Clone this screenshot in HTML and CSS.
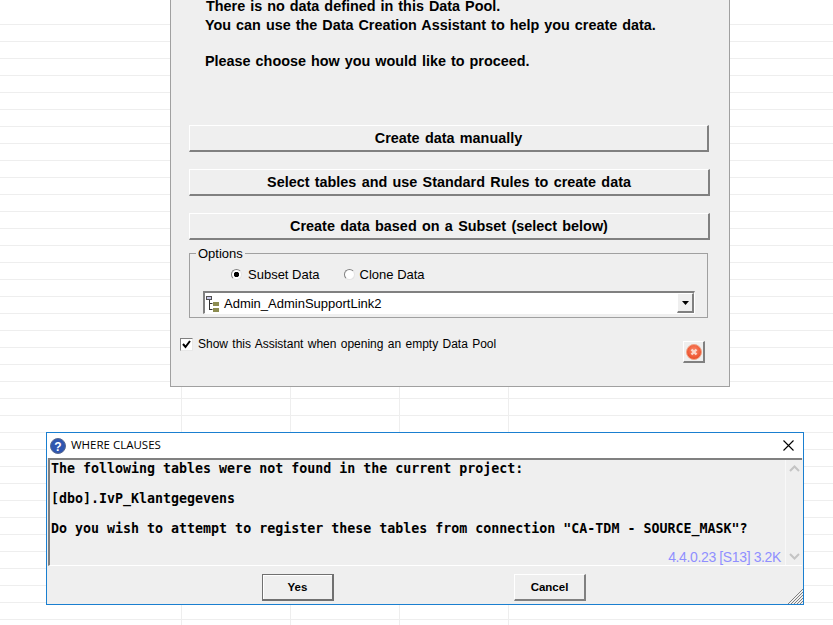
FILE: index.html
```html
<!DOCTYPE html>
<html lang="en">
<head>
<meta charset="utf-8">
<title>Data Creation Assistant</title>
<link rel="stylesheet" href="styles.css">
</head>
<body>
<div class="desktop">
  <div class="sheet-cols"></div>

  <section class="assistant">
    <div class="intro">
      <p class="intro-first">There is no data defined in this Data Pool.</p>
      <p class="intro-second">You can use the Data Creation Assistant to help you create data.</p>
      <p class="intro-third">Please choose how you would like to proceed.</p>
    </div>
    <div class="actions">
      <button class="action">Create data manually</button>
      <button class="action action-wide">Select tables and use Standard Rules to create data</button>
      <button class="action action-wide">Create data based on a Subset (select below)</button>
    </div>
    <div class="options">
      <span class="options-title">Options</span>
      <div class="radios">
        <span class="radio radio-on"></span><span class="radio-label">Subset Data</span>
        <span class="radio radio-second"></span><span class="radio-label radio-label-second">Clone Data</span>
      </div>
      <div class="combo">
        <svg class="tree-icon" width="15" height="17" viewBox="0 0 15 17">
          <rect x="0.5" y="1.5" width="5" height="3" fill="#c8c8e8" stroke="#505050"/>
          <path d="M3.5 5v10M3.5 8.5h3M3.5 14.5h3" fill="none" stroke="#303030"/>
          <rect x="7" y="7" width="6" height="4" fill="#8c8c50"/>
          <rect x="7" y="13" width="6" height="4" fill="#8c8c50"/>
        </svg>
        <span class="combo-value">Admin_AdminSupportLink2</span>
        <span class="combo-drop"><svg width="7" height="4" viewBox="0 0 7 4"><path d="M0 0h7L3.5 4z" fill="#000"/></svg></span>
      </div>
    </div>
    <div class="assistant-foot">
      <label class="show-check">
        <span class="checkbox"><svg width="9" height="9" viewBox="0 0 9 9"><path d="M1 4l2.5 3L8 1" fill="none" stroke="#000" stroke-width="2"/></svg></span>
        Show this Assistant when opening an empty Data Pool
      </label>
      <button class="close-btn" aria-label="Close">
        <svg width="16" height="16" viewBox="0 0 16 16">
          <defs>
            <radialGradient id="closeFill" cx="50%" cy="40%" r="60%">
              <stop offset="0" stop-color="#fb8a6c"/>
              <stop offset="1" stop-color="#ea4a24"/>
            </radialGradient>
          </defs>
          <circle cx="8" cy="8" r="7.5" fill="url(#closeFill)" stroke="#f0a488"/>
          <path d="M5.5 5.5l5 5M10.5 5.5l-5 5" stroke="#fbd8cc" stroke-width="2.4"/>
        </svg>
      </button>
    </div>
  </section>

  <section class="where">
    <header class="where-title">
      <svg class="help-icon" width="16" height="16" viewBox="0 0 16 16">
        <circle cx="8" cy="8" r="7.5" fill="#2f56b0" stroke="#5a6a90"/>
        <text x="8" y="12.5" class="help-mark">?</text>
      </svg>
      <span class="where-title-text">WHERE CLAUSES</span>
      <svg class="x-icon" width="11" height="11" viewBox="0 0 11 11"><path d="M0.5 0.5l10 10M10.5 0.5l-10 10" stroke="#000" stroke-width="1.1" fill="none"/></svg>
    </header>
    <div class="memo">
      <div class="memo-text">
        <p>The following tables were not found in the current project:</p>
        <p>[dbo].IvP_Klantgegevens</p>
        <p>Do you wish to attempt to register these tables from connection "CA-TDM - SOURCE_MASK"?</p>
        <span class="version">4.4.0.23 [S13] 3.2K</span>
      </div>
      <div class="scroll">
        <svg width="11" height="7" viewBox="0 0 11 7"><path d="M1 6l4.5-4.5L10 6" fill="none" stroke="#c4c4c4" stroke-width="2"/></svg>
        <svg width="11" height="7" viewBox="0 0 11 7"><path d="M1 1l4.5 4.5L10 1" fill="none" stroke="#c4c4c4" stroke-width="2"/></svg>
      </div>
    </div>
    <footer class="where-foot">
      <button class="dlg-btn dlg-default">Yes</button>
      <button class="dlg-btn">Cancel</button>
      <svg class="grip" width="16" height="16" viewBox="0 0 16 16"><path d="M16 1L1 16M16 4L4 16M16 7L7 16M16 10L10 16M16 13L13 16" stroke="#808080" fill="none"/></svg>
    </footer>
  </section>
</div>
</body>
</html>
```
FILE: styles.css
```css
* { box-sizing: border-box; }
html, body { margin: 0; padding: 0; }
body { font-family: "Liberation Sans", Arial, sans-serif; color: #000; background: #fff; }
p { margin: 0; }
button { font-family: inherit; color: #000; padding: 0; cursor: default; }

.desktop {
  position: relative;
  width: 833px;
  height: 625px;
  overflow: hidden;
  background-color: #fff;
  background-image: repeating-linear-gradient(to bottom, transparent 0, transparent 16px, #eeeeee 16px, #eeeeee 17px);
  background-position: 0 8px;
}
.sheet-cols {
  position: absolute;
  left: 181px;
  top: 387px;
  width: 328px;
  height: 238px;
  background-image: repeating-linear-gradient(to right, #eeeeee 0, #eeeeee 1px, transparent 1px, transparent 109px);
}

/* Assistant window */
.assistant {
  position: absolute;
  left: 170px;
  top: 0;
  width: 560px;
  height: 387px;
  background: #efefef;
  border: 1px solid #a0a0a0;
  border-top: 0;
  padding-left: 18px;
}
.intro { height: 125px; font-size: 14.4px; font-weight: bold; line-height: 18px; word-spacing: 1px; }
.intro-first { padding-left: 17px; line-height: 12px; }
.intro-second { padding-left: 16px; margin-top: 4px; }
.intro-third { padding-left: 16px; margin-top: 18px; }

.actions { display: flex; flex-direction: column; gap: 17px; }
.action {
  width: 520px;
  height: 27px;
  background: #efefef;
  font-size: 14.4px;
  font-weight: bold;
  word-spacing: 1.3px;
  border: 1px solid;
  border-color: #fff #808080 #808080 #fff;
  border-width: 1px 2px 2px 1px;
}
.action-wide { width: 521px; }

.options {
  position: relative;
  width: 519px;
  height: 65px;
  margin-top: 13px;
  border: 1px solid #a0a0a0;
  padding: 13px 13px 0 13px;
  font-size: 12px;
}
.options-title {
  position: absolute;
  left: 6px;
  top: -7px;
  padding: 0 2px;
  background: #efefef;
  font-size: 13px;
  line-height: 14px;
}
.radios { display: flex; align-items: center; height: 14px; padding-left: 28px; font-size: 13px; }
.radio {
  width: 11px;
  height: 11px;
  border-radius: 50%;
  background: #fff;
  border: 1px solid;
  border-color: #808080 #e4e4e4 #e4e4e4 #808080;
  flex: none;
}
.radio-on { background: radial-gradient(circle, #000 0, #000 2.4px, #fff 3px); }
.radio-second { margin-left: 24px; }
.radio-label { margin-left: 6px; }
.radio-label-second { margin-left: 5px; }

.combo {
  display: flex;
  align-items: center;
  width: 492px;
  height: 23px;
  margin-top: 10px;
  background: #fff;
  border: solid;
  border-width: 2px 1px 1px 2px;
  border-color: #808080 #fff #fff #808080;
  padding-left: 1px;
  font-size: 13px;
}
.tree-icon { flex: none; }
.combo-value { margin-left: 3px; flex: 1; }
.combo-drop {
  display: flex;
  align-items: center;
  justify-content: center;
  width: 17px;
  height: 20px;
  background: #efefef;
  border: solid;
  border-width: 1px 2px 2px 1px;
  border-color: #fff #808080 #808080 #fff;
}

.assistant-foot { position: relative; height: 45px; margin-left: -9px; font-size: 12px; word-spacing: 1px; }
.show-check { display: flex; align-items: center; padding-top: 19px; line-height: 14px; }
.checkbox {
  display: flex;
  align-items: center;
  justify-content: center;
  width: 13px;
  height: 13px;
  margin-right: 5px;
  background: #fff;
  border: 1px solid;
  border-color: #808080 #e8e8e8 #e8e8e8 #808080;
  flex: none;
}
.close-btn {
  position: absolute;
  left: 503px;
  top: 23px;
  display: flex;
  align-items: center;
  justify-content: center;
  width: 22px;
  height: 22px;
  background: #efefef;
  border: solid;
  border-width: 1px 2px 2px 1px;
  border-color: #fff #808080 #808080 #fff;
}

/* Where clauses dialog */
.where {
  position: absolute;
  left: 46px;
  top: 432px;
  width: 758px;
  height: 173px;
  background: #efefef;
  border: 1px solid #1a7fd0;
  display: flex;
  flex-direction: column;
}
.where-title {
  display: flex;
  align-items: center;
  height: 25px;
  flex: none;
  background: #fff;
  padding: 0 9px 0 3px;
}
.help-icon { flex: none; }
.help-mark { font: bold 12px "Liberation Sans", sans-serif; fill: #fff; text-anchor: middle; }
.where-title-text { margin-left: 5px; flex: 1; font-family: "Open Sans", sans-serif; font-size: 11.5px; line-height: 14px; margin-top: -2px; color: #000; }
.memo {
  display: flex;
  height: 108px;
  flex: none;
  margin: 0 1px;
  border-top: 2px solid #808080;
  border-left: 2px solid #808080;
  border-bottom: 1px solid #fff;
}
.memo-text {
  position: relative;
  flex: 1;
  padding: 1px 0 0 1px;
  font-family: "DejaVu Sans Mono", monospace;
  font-weight: bold;
  font-size: 13.3px;
  line-height: 15px;
}
.memo-text p { height: 30px; white-space: nowrap; }
.version {
  position: absolute;
  right: 4px;
  bottom: 0;
  font-family: "Liberation Sans", sans-serif;
  font-weight: normal;
  font-size: 14px;
  letter-spacing: -0.37px;
  line-height: 16px;
  color: #8f8fff;
}
.scroll {
  display: flex;
  flex-direction: column;
  align-items: center;
  justify-content: space-between;
  width: 17px;
  padding: 5px 0;
  border-left: 1px solid #f8f8f8;
}
.where-foot { position: relative; flex: 1; display: flex; gap: 180px; padding: 7px 0 0 215px; }
.dlg-btn {
  width: 72px;
  height: 27px;
  margin-top: 1px;
  background: #efefef;
  font-size: 11.5px;
  font-weight: bold;
  border: solid;
  border-width: 1px 2px 2px 1px;
  border-color: #fff #808080 #808080 #fff;
}
.dlg-default { border-color: #707070; box-shadow: inset 1px 1px 0 #fff; }
.grip { position: absolute; right: 0; bottom: 0; }
```
